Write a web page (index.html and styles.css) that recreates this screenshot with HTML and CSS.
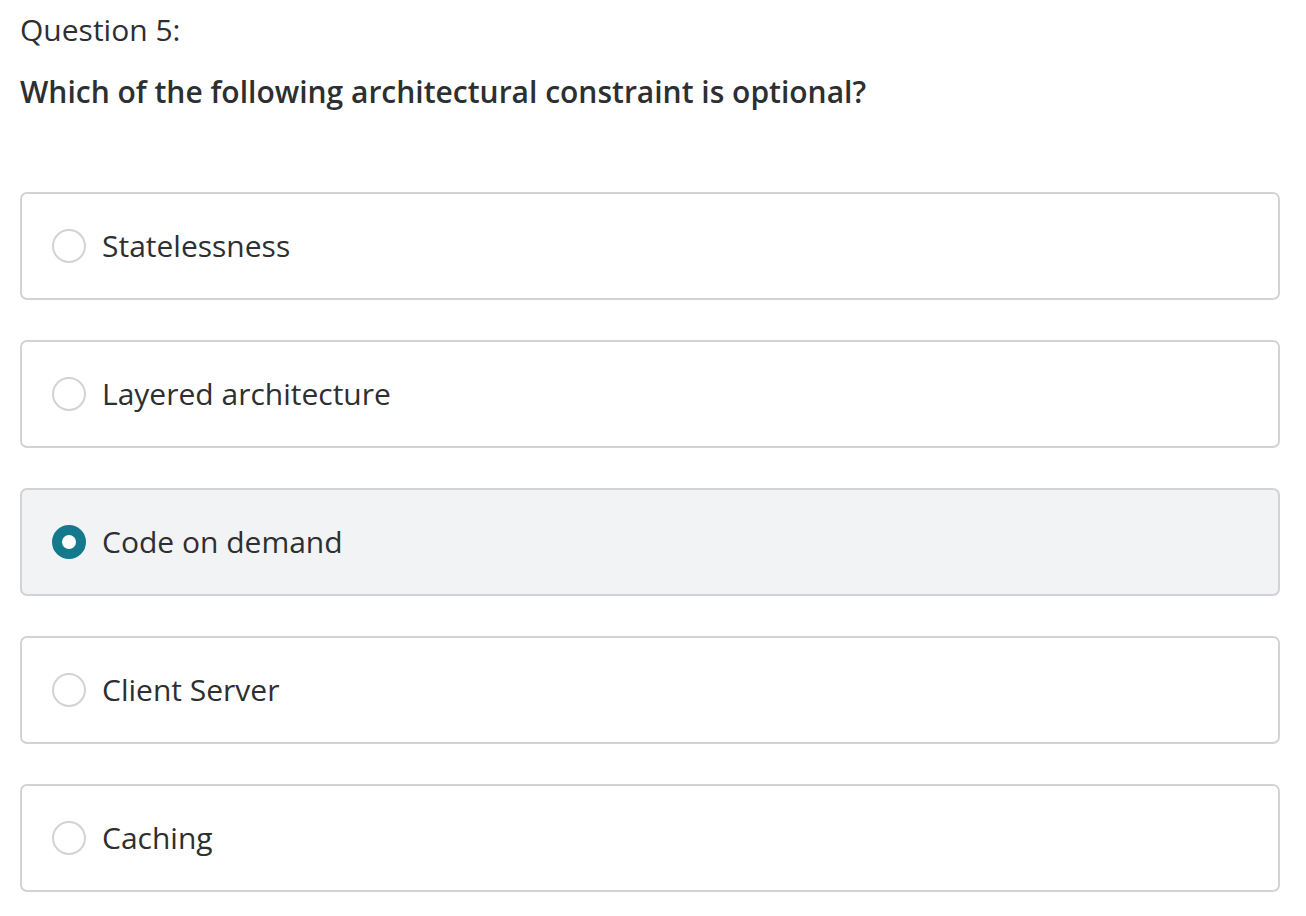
FILE: index.html
```html
<!DOCTYPE html>
<html lang="en">
<head>
<meta charset="utf-8">
<title>Question 5</title>
<link rel="stylesheet" href="styles.css">
</head>
<body>
<div class="quiz">
  <div class="q-label">Question 5:</div>
  <div class="q-text">Which of the following architectural constraint is optional?</div>
  <ul class="options">
    <li class="option"><span class="radio"></span><span class="opt-text">Statelessness</span></li>
    <li class="option"><span class="radio"></span><span class="opt-text">Layered architecture</span></li>
    <li class="option selected"><span class="radio"></span><span class="opt-text">Code on demand</span></li>
    <li class="option"><span class="radio"></span><span class="opt-text">Client Server</span></li>
    <li class="option"><span class="radio"></span><span class="opt-text">Caching</span></li>
  </ul>
</div>
</body>
</html>
```

FILE: styles.css
```css
html, body {
  margin: 0;
  padding: 0;
  background: #ffffff;
}
body {
  font-family: "Open Sans", "DejaVu Sans", sans-serif;
  color: #2d2f31;
}
.quiz {
  padding: 10px 26px 0 20px;
}
.q-label {
  font-size: 30px;
  line-height: 40px;
  font-weight: 400;
}
.q-text {
  margin-top: 22px;
  font-size: 30px;
  line-height: 40px;
  font-weight: 600;
}
.options {
  list-style: none;
  margin: 80px 0 0 0;
  padding: 0;
  display: flex;
  flex-direction: column;
  gap: 40px;
}
.option {
  box-sizing: border-box;
  height: 108px;
  border: 2px solid #d1d3d6;
  border-radius: 7px;
  display: flex;
  align-items: center;
  padding-left: 30px;
  background: #ffffff;
}
.option.selected {
  background: #f2f3f5;
}
.radio {
  box-sizing: border-box;
  width: 34px;
  height: 34px;
  border-radius: 50%;
  border: 2px solid #d1d3d6;
  background: #ffffff;
  flex: none;
}
.option.selected .radio {
  border: 10px solid #15798e;
  background: #ffffff;
}
.opt-text {
  margin-left: 16px;
  font-size: 30px;
  line-height: 40px;
}
```
